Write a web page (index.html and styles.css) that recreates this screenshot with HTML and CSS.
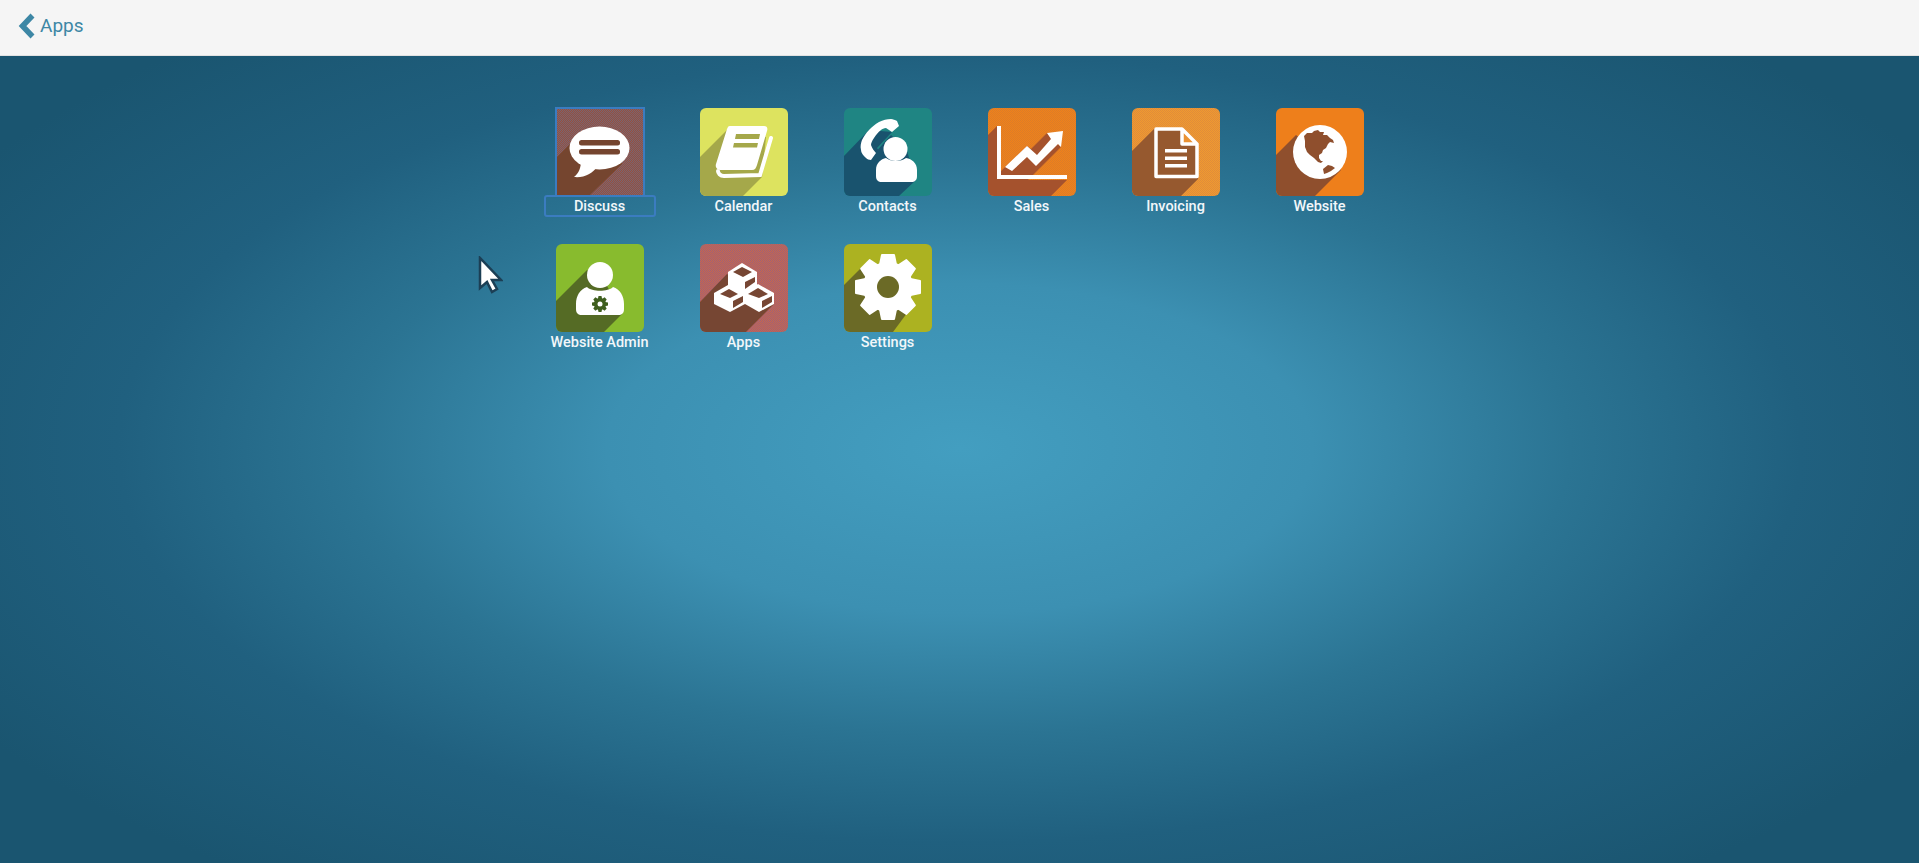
FILE: index.html
```html
<!DOCTYPE html>
<html lang="en">
<head>
    <meta charset="UTF-8">
    <title>Apps</title>
    <link rel="stylesheet" href="styles.css">
</head>
<body>
<header class="topbar">
    <a class="back" href="#">
        <svg class="chevron" width="18" height="26" viewBox="0 0 18 26"><path d="M14.500 2.500 4.500 13l10 10.500" fill="none" stroke="#3d87a5" stroke-width="5.500"/></svg>
        <span>Apps</span>
    </a>
</header>

<svg class="defs" width="0" height="0">
    <defs>
        <g id="gear">
            <circle cx="0" cy="0" r="24"/>
            <path id="tooth" d="M-6 -32H6L8.500 -20H-8.500Z"/>
            <use href="#tooth" transform="rotate(45)"/>
            <use href="#tooth" transform="rotate(90)"/>
            <use href="#tooth" transform="rotate(135)"/>
            <use href="#tooth" transform="rotate(180)"/>
            <use href="#tooth" transform="rotate(225)"/>
            <use href="#tooth" transform="rotate(270)"/>
            <use href="#tooth" transform="rotate(315)"/>
        </g>
    </defs>
</svg>

<main class="apps">
    <!-- row 1 -->
    <a class="app is-focus" href="#">
        <div class="tile discuss">
            <svg viewBox="0 0 88 88">
                <path d="M0 50 20 30H60L66 56 33 88H0Z" fill="#75452f"/>
                <ellipse cx="43.500" cy="40" rx="30" ry="21.500" fill="#fff"/>
                <path d="M25 52C25 60 23 65 18 69 28 70 36 66 42 58Z" fill="#fff"/>
                <rect x="23" y="32" width="41" height="5.500" rx="2.500" fill="#75452f"/>
                <rect x="23" y="41" width="41" height="5.500" rx="2.500" fill="#75452f"/>
            </svg>
        </div>
        <span class="label">Discuss</span>
    </a>
    <a class="app" href="#">
        <div class="tile calendar">
            <svg viewBox="0 0 88 88">
                <path d="M0 49 27 22 66 29 62 69 43 88H0Z" fill="#a5a84a"/>
                <path d="M71 30 60 67 24 68C20 68 18 65 18 63" fill="none" stroke="#fff" stroke-width="4" stroke-linecap="round"/>
                <path d="M30 18 64 18C67 18 68 20 67 23L57 57C56 60 55 62 52 62L21 62C17 62 15 59 16 56L27 21C28 19 28 18 30 18Z" fill="#fff"/>
                <path d="M36 26H60L59 31H35Z" fill="#a5a84a"/>
                <path d="M34 35H58L57 39.500H33Z" fill="#a5a84a"/>
            </svg>
        </div>
        <span class="label">Calendar</span>
    </a>
    <a class="app" href="#">
        <div class="tile contacts">
            <svg viewBox="0 0 88 88">
                <path d="M0 48 25 22 48 24 33 40 34 41.500 47 27 62 40 72 72 55 88H0Z" fill="#19536e"/>
                <path d="M53 13 55 18 48 24 42 20C40 20 38 21 37 22 34 24 32 27 30 30 28 33 27 35 27 37 28 40 30 43 32 45L27 52C25 52 23 51 22 50 19 47 17 45 17 42 16 38 17 35 18 32 20 28 22 25 25 22 28 19 31 16 35 14 39 12 43 11 47 11 49 11 51 12 53 13Z" fill="#fff"/>
                <circle cx="51.500" cy="41" r="12" fill="#fff"/>
                <path d="M32 62C32 55 37 51 42 50 47 54 57 54 62 50 68 51 73 55 73 62V68C73 72 71 74 67 74H38C34 74 32 72 32 68Z" fill="#fff"/>
            </svg>
        </div>
        <span class="label">Contacts</span>
    </a>
    <a class="app" href="#">
        <div class="tile sales">
            <svg viewBox="0 0 88 88">
                <path d="M9 18 0 27V88H63L79 72H13V18Z" fill="#a5522d"/>
                <path d="M59 25 73 39 40 72H13V63L39 38 43 41Z" fill="#a5522d"/>
                <path d="M11 18V69H79" fill="none" stroke="#fff" stroke-width="4"/>
                <path d="M17 59 39 38 49 47 63 31 59 25 75 23 73 39 70 36 48 58 39 49 24 63Z" fill="#fff"/>
            </svg>
        </div>
        <span class="label">Sales</span>
    </a>
    <a class="app" href="#">
        <div class="tile invoicing">
            <svg viewBox="0 0 88 88">
                <path d="M0 43 23 20H50L66 35V71L49 88H0Z" fill="#96592f"/>
                <path d="M50 20 66 36H50Z" fill="#ea9233"/>
                <path d="M50 21H24V68.500H65V36L50 21V36H65" fill="none" stroke="#fff" stroke-width="3.500" stroke-linejoin="round"/>
                <rect x="33" y="41" width="22" height="3.500" fill="#fff"/>
                <rect x="33" y="48.500" width="22" height="3.500" fill="#fff"/>
                <rect x="33" y="56" width="22" height="3.500" fill="#fff"/>
            </svg>
        </div>
        <span class="label">Invoicing</span>
    </a>
    <a class="app" href="#">
        <div class="tile website">
            <svg viewBox="0 0 88 88">
                <path d="M0 47 20 27 65 62 39 88H0Z" fill="#8f4f2d"/>
                <circle cx="44" cy="44" r="27" fill="#fff"/>
                <path d="M28 28 31 25 36 25 38 23 42 22 44 24 48 24 47 27 51 27 54 30 57 32 58 35 54 34 52 36 50 40 47 42 46 45 43 47 43 50 45 53 47 53 45 55 42 54 38 50 34 47 31 44 29 39 29 33Z" fill="#8f4f2d"/>
                <path d="M47 61 52 57 56 58 59 60 55 63 51 65 48 66Z" fill="#8f4f2d"/>
            </svg>
        </div>
        <span class="label">Website</span>
    </a>

    <!-- row 2 -->
    <a class="app" href="#">
        <div class="tile admin">
            <svg viewBox="0 0 88 88">
                <path d="M0 57 31 26 50 40 66 70 48 88H0Z" fill="#556b25"/>
                <circle cx="44" cy="31" r="13" fill="#fff"/>
                <path d="M20 60C20 52 24 45 31 43 36 48 52 48 57 43 64 45 68 52 68 60V65C68 69 66 71 62 71H26C22 71 20 69 20 65Z" fill="#fff"/>
                <use href="#gear" transform="translate(44 60) scale(.25)" fill="#3f5f1e"/>
                <circle cx="44" cy="60" r="2.500" fill="#fff"/>
            </svg>
        </div>
        <span class="label">Website Admin</span>
    </a>
    <a class="app" href="#">
        <div class="tile apps-icon">
            <svg viewBox="0 0 88 88">
                <path d="M0 58 27 30 74 60 46 88H0Z" fill="#764633"/>
                <g fill="#fff">
                    <path d="M42 19 57 28V42L42 52 28 42V28Z"/>
                    <path d="M28 41 45 49V60L30 68 14 60V49Z"/>
                    <path d="M58 40 74 49V60L59 68 45 60V49Z"/>
                </g>
                <g fill="#764633">
                    <path d="M33 28 42 23 52 28 43 33Z"/>
                    <path d="M45 38 55 33V38L45 45Z"/>
                    <path d="M20 50 29 45 38 50 30 54Z"/>
                    <path d="M33 57 43 52V58L33 64Z"/>
                    <path d="M48 50 58 44 68 50 59 54Z"/>
                    <path d="M62 57 72 52V58L62 64Z"/>
                </g>
            </svg>
        </div>
        <span class="label">Apps</span>
    </a>
    <a class="app" href="#">
        <div class="tile settings">
            <svg viewBox="0 0 88 88">
                <path d="M0 41 20 21 69 61 49 88H0Z" fill="#6b6a26"/>
                <use href="#gear" transform="translate(44 43)" fill="#fff" stroke="#fff" stroke-width="2" stroke-linejoin="round"/>
                <circle cx="44" cy="43" r="11" fill="#6b6a26"/>
            </svg>
        </div>
        <span class="label">Settings</span>
    </a>
</main>

<svg class="cursor" width="26" height="38" viewBox="0 0 26 38">
    <path d="M3 2V32L10 26 15 36 20 33 15 24H24Z" fill="#fff" stroke="#1c3f55" stroke-width="2.500"/>
</svg>
</body>
</html>
```

FILE: styles.css
```css
*{margin: 0; padding: 0; box-sizing: border-box}

html, body{
    height: 100%;
}
body{
    display: flex;
    flex-direction: column;
    position: relative;
    overflow: hidden;
    font-family: Roboto, "Liberation Sans", sans-serif;
    background: radial-gradient(ellipse at 50% 52%, #439ec0 0, #3c90b2 26%, #2b7493 45%, #20607f 62%, #1a5570 85%);
}
a{
    text-decoration: none;
}

.topbar{
    flex: none;
    height: 56px;
    padding: 0 0 4px 18px;
    display: flex;
    align-items: center;
    background: #f5f5f5;
    border-bottom: 1px solid #e2e2e2;
}
.back{
    display: flex;
    align-items: center;
    gap: 4px;
    color: #3d87a5;
    font-size: 19px;
}
.chevron{
    display: block;
}

.defs{
    position: absolute;
}

.apps{
    width: 830px;
    margin: 0 auto;
    padding-top: 52px;
    display: grid;
    grid-template-columns: repeat(6, 110px);
    grid-auto-rows: 108px;
    column-gap: 34px;
    row-gap: 28px;
}
.app{
    display: flex;
    flex-direction: column;
    align-items: center;
}
.label{
    width: 100%;
    height: 20px;
    line-height: 22px;
    text-align: center;
    color: #f2f7fa;
    font-size: 14.500px;
    font-weight: 500;
    white-space: nowrap;
}
.tile{
    width: 88px;
    height: 88px;
    border-radius: 6px;
    overflow: hidden;
}
.tile svg{
    display: block;
    width: 88px;
    height: 88px;
}

.is-focus .tile{
    border-radius: 0;
    outline: 2px solid #3b7cc0;
    outline-offset: -1px;
}
.is-focus .label{
    outline: 2px solid #3b7cc0;
    outline-offset: -1px;
    border-radius: 2px;
}

/* dithered tile colours */
.discuss{
    background: repeating-conic-gradient(#95503f 0 25%, #7a6470 0 50%) 0 0/2px 2px;
}
.calendar{
    background: #dde35f;
}
.contacts{
    background: #1f8583;
}
.sales{
    background: repeating-conic-gradient(#f0821a 0 25%, #dc7c28 0 50%) 0 0/2px 2px;
}
.invoicing{
    background: repeating-conic-gradient(#f09a30 0 25%, #e08c3a 0 50%) 0 0/2px 2px;
}
.website{
    background: #ee7f1b;
}
.admin{
    background: #88bb2e;
}
.apps-icon{
    background: repeating-conic-gradient(#c8694a 0 25%, #a05f78 0 50%) 0 0/2px 2px;
}
.settings{
    background: #acb221;
}

.cursor{
    position: absolute;
    left: 477px;
    top: 256px;
}
```
